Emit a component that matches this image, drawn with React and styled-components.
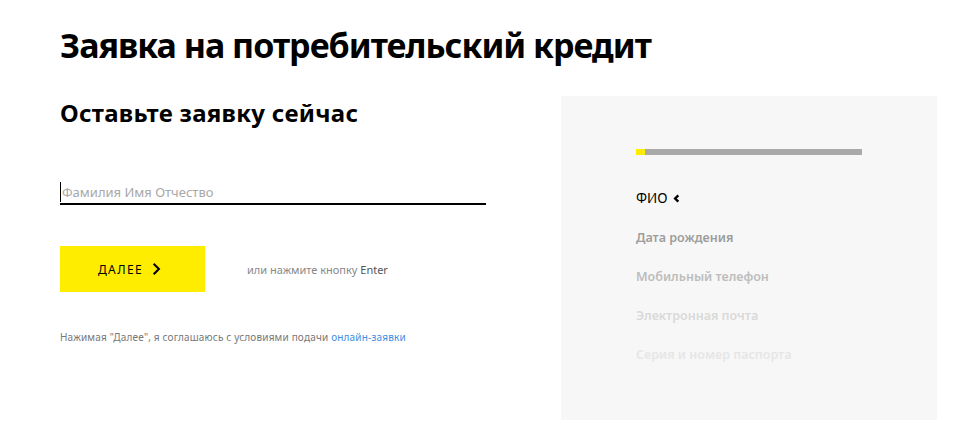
import React from 'react';
import styled, { createGlobalStyle } from 'styled-components';

const GlobalStyle = createGlobalStyle`
  html, body {
    margin: 0;
    padding: 0;
    background: #fff;
  }
  body {
    font-family: "Noto Sans", "Open Sans", sans-serif;
    color: #000;
  }
`;

const Page = styled.div`
  width: 962px;
  height: 434px;
  padding: 23px 0 0 60px;
  box-sizing: border-box;
`;

const Title = styled.h1`
  margin: 0;
  font-size: 34px;
  line-height: 44px;
  font-weight: 700;
  letter-spacing: -1px;
`;

const Columns = styled.div`
  display: flex;
  align-items: flex-start;
  gap: 75px;
  margin-top: 29px;
`;

const Left = styled.div`
  width: 426px;
  padding-top: 2px;
`;

const Subtitle = styled.h2`
  margin: 0;
  font-size: 24px;
  line-height: 30px;
  font-weight: 700;
  letter-spacing: 0.3px;
`;

const Field = styled.div`
  margin-top: 53px;
  border-bottom: 2px solid #000;
  height: 22px;
  display: flex;
  align-items: center;
`;

const Input = styled.input`
  border: none;
  outline: none;
  background: transparent;
  padding: 0 0 0 1px;
  width: 100%;
  font-family: inherit;
  font-size: 13px;
  color: #000;
  border-left: 1px solid #000;
  height: 20px;
  &::placeholder {
    color: #a8a8a8;
  }
`;

const Actions = styled.div`
  display: flex;
  align-items: center;
  margin-top: 41px;
`;

const Button = styled.button`
  width: 145px;
  height: 46px;
  border: none;
  background: #ffed00;
  display: flex;
  align-items: center;
  justify-content: center;
  gap: 6px;
  font-family: inherit;
  font-size: 12px;
  letter-spacing: 1.4px;
  color: #000;
  cursor: pointer;
  padding: 0 4px 0 0;
`;

const Hint = styled.span`
  margin-left: 42px;
  font-size: 11px;
  color: #888;
`;

const Key = styled.span`
  color: #555;
`;

const Agreement = styled.p`
  margin: 38px 0 0;
  font-size: 10px;
  letter-spacing: 0.18px;
  color: #777;
`;

const Link = styled.a`
  color: #3d8ee6;
  text-decoration: none;
`;

const Panel = styled.aside`
  width: 376px;
  height: 324px;
  background: #f7f7f7;
  box-sizing: border-box;
  padding: 53px 75px 0;
`;

const Progress = styled.div`
  height: 6px;
  background: #aaa;
  display: flex;
`;

const ProgressFill = styled.div`
  width: 9px;
  background: #ffed00;
`;

const Steps = styled.ul`
  list-style: none;
  margin: 34px 0 0;
  padding: 0;
  display: flex;
  flex-direction: column;
  gap: 20px;
`;

const Step = styled.li`
  font-size: ${p => (p.$active ? '13.5px' : '12.5px')};
  line-height: 19px;
  font-weight: ${p => (p.$active ? 400 : 600)};
  color: ${p => p.$color};
  display: flex;
  align-items: center;
  gap: 3px;
`;

const Chevron = ({ dir = 'right', size = 12, width = 2 }) => (
  <svg width={size} height={size} viewBox="0 0 12 12" fill="none">
    <path
      d={dir === 'right' ? 'M4 1.5 L8.5 6 L4 10.5' : 'M8 2.5 L4.5 6 L8 9.5'}
      stroke="#000"
      strokeWidth={width}
    />
  </svg>
);

const steps = [
  { label: 'Дата рождения', color: '#9d9d9d' },
  { label: 'Мобильный телефон', color: '#bdbdbd' },
  { label: 'Электронная почта', color: '#d9d9d9' },
  { label: 'Серия и номер паспорта', color: '#e6e6e6' },
];

export default function App() {
  return (
    <>
      <GlobalStyle />
      <Page>
        <Title>Заявка на потребительский кредит</Title>
        <Columns>
          <Left>
            <Subtitle>Оставьте заявку сейчас</Subtitle>
            <Field>
              <Input placeholder="Фамилия Имя Отчество" />
            </Field>
            <Actions>
              <Button>
                ДАЛЕЕ <Chevron size={14} width={1.8} />
              </Button>
              <Hint>
                или нажмите кнопку <Key>Enter</Key>
              </Hint>
            </Actions>
            <Agreement>
              Нажимая "Далее", я соглашаюсь с условиями подачи{' '}
              <Link href="#">онлайн-заявки</Link>
            </Agreement>
          </Left>
          <Panel>
            <Progress>
              <ProgressFill />
            </Progress>
            <Steps>
              <Step $active $color="#000">
                ФИО <Chevron dir="left" size={11} width={2.6} />
              </Step>
              {steps.map(s => (
                <Step key={s.label} $color={s.color}>
                  {s.label}
                </Step>
              ))}
            </Steps>
          </Panel>
        </Columns>
      </Page>
    </>
  );
}
